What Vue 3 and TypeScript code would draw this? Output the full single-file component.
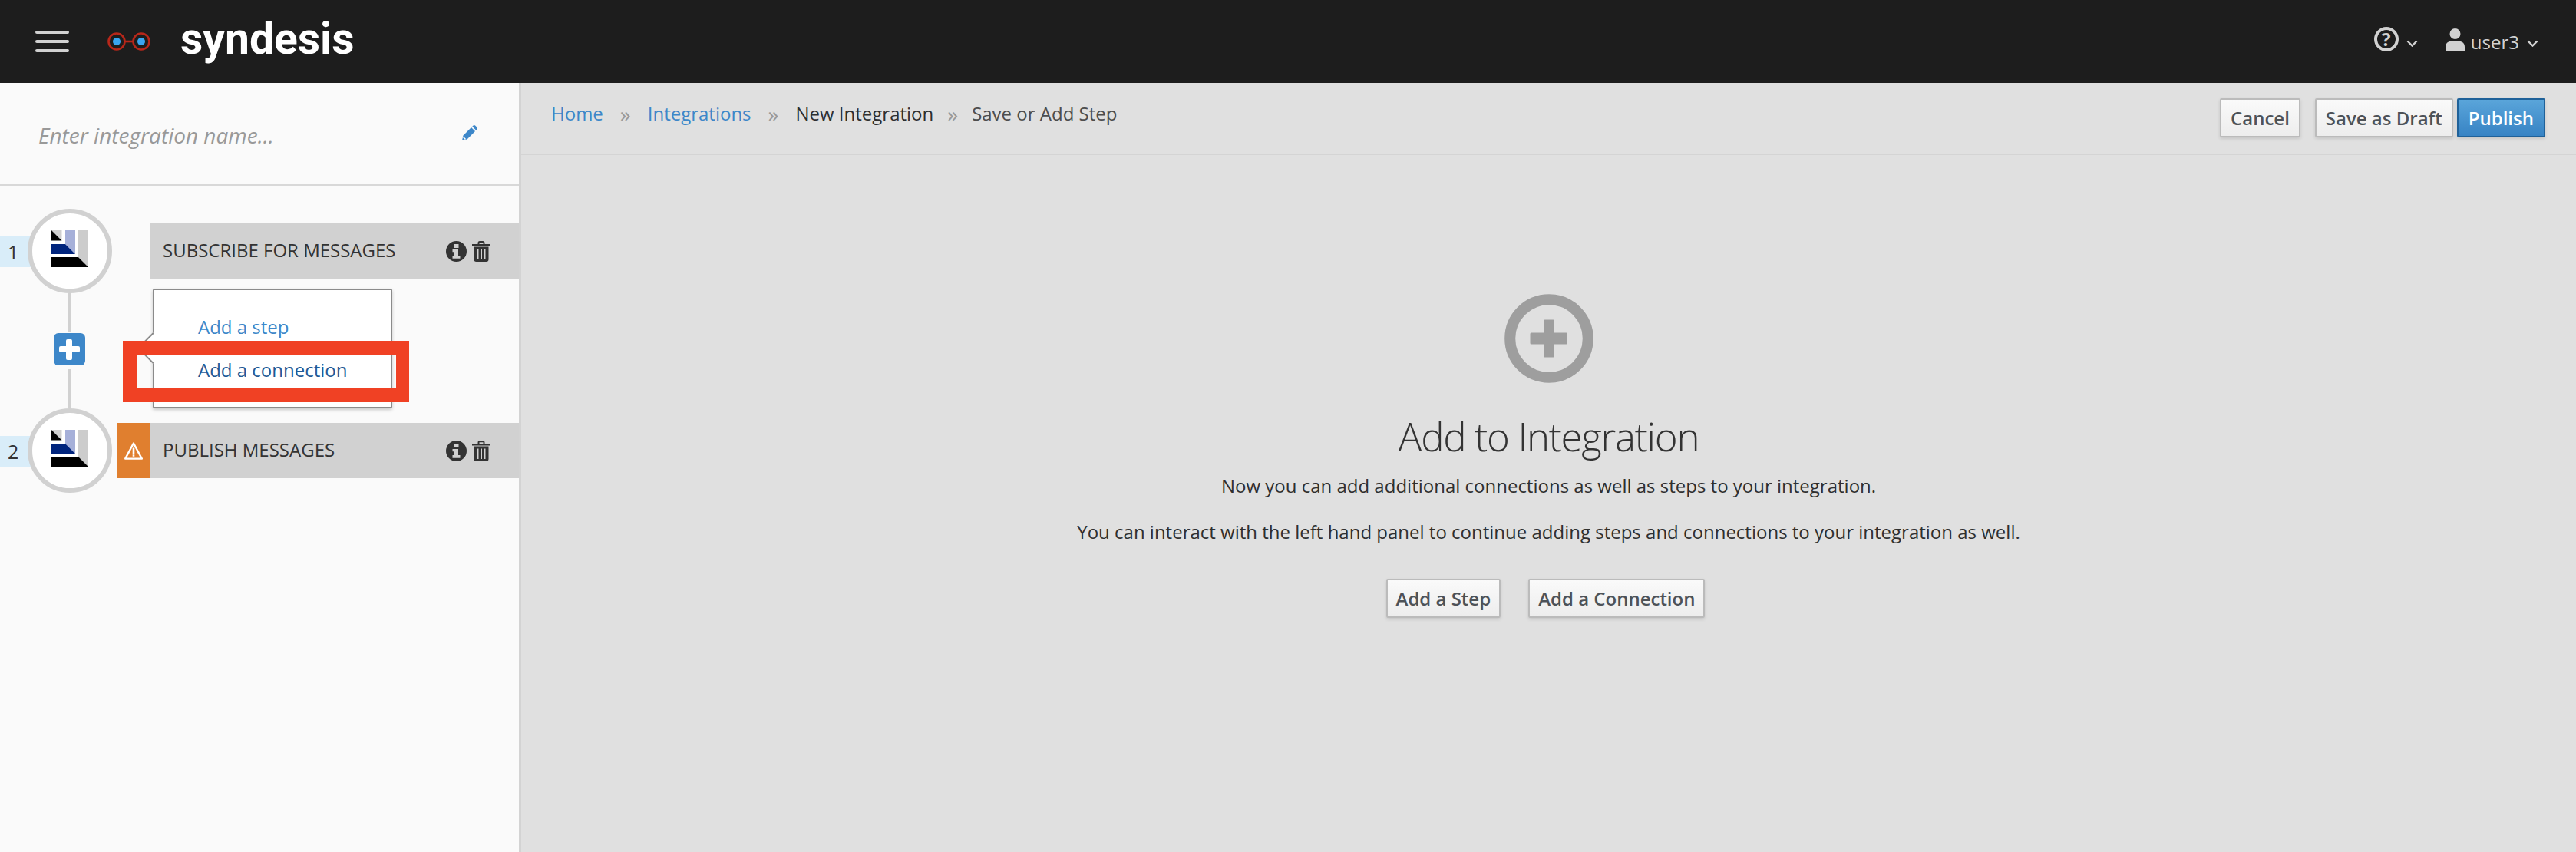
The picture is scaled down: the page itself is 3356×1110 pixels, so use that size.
<script setup lang="ts">
interface Step { n: number; name: string; warn: boolean }
const steps: Step[] = [
  { n: 1, name: 'SUBSCRIBE FOR MESSAGES', warn: false },
  { n: 2, name: 'PUBLISH MESSAGES', warn: true },
]
</script>

<template>
  <div class="page">
    <header class="top">
      <div class="burger"><i></i><i></i><i></i></div>
      <svg class="glasses" width="56" height="24" viewBox="0 0 56 24">
        <circle cx="12" cy="12" r="10.5" fill="none" stroke="#b8271a" stroke-width="2.6" />
        <circle cx="44" cy="12" r="10.5" fill="none" stroke="#b8271a" stroke-width="2.6" />
        <path d="M22 12h12" stroke="#b8271a" stroke-width="2.6" />
        <circle cx="12" cy="12" r="5" fill="#39a5f1" />
        <circle cx="44" cy="12" r="5" fill="#39a5f1" />
      </svg>
      <span class="brand">syndesis</span>
      <div class="top-right">
        <span class="help">?</span>
        <svg class="chev first" width="15" height="9" viewBox="0 0 15 9"><path d="M1.5 1.5l6 6 6-6" fill="none" stroke="#d1d1d1" stroke-width="2.4" /></svg>
        <svg class="user-ic" width="25" height="29" viewBox="0 0 25 29">
          <circle cx="12.5" cy="7" r="7" fill="#d1d1d1" />
          <path d="M0 29v-5c0-6 5-8 12.5-8S25 18 25 24v5z" fill="#d1d1d1" />
        </svg>
        <span class="user">user3</span>
        <svg class="chev" width="15" height="9" viewBox="0 0 15 9"><path d="M1.5 1.5l6 6 6-6" fill="none" stroke="#d1d1d1" stroke-width="2.4" /></svg>
      </div>
    </header>

    <div class="body">
      <aside class="side">
        <div class="name-row">
          <span class="placeholder">Enter integration name...</span>
          <svg class="pencil" width="20" height="20" viewBox="0 0 20 20">
            <path d="M0 20l1.5-6.5L12 3l5 5L6.5 18.500z" fill="#3d87c9" />
            <path d="M13.300 1.700l1-1a2.200 2.200 0 0 1 3 0l2 2a2.200 2.200 0 0 1 0 3l-1 1z" fill="#3d87c9" />
            <path d="M1.500 15.500l3 3" stroke="#fff" stroke-width="1.600" />
          </svg>
        </div>

        <div class="flow">
          <template v-for="(s, i) in steps" :key="s.n">
            <div class="step">
              <span class="num">{{ s.n }}</span>
              <span class="circle">
                <svg width="48" height="48" viewBox="0 0 48 48">
                  <path d="M0 0h13.500v13.500z" fill="#cfcfcf" />
                  <path d="M0 0l13.500 13.500H0z" fill="#000" />
                  <path d="M18 0h13v31L18 18z" fill="#a6b0d9" />
                  <path d="M0 18h18l13 13H0z" fill="#00247d" />
                  <path d="M35 0h13v48L35 35z" fill="#cccccc" />
                  <path d="M0 35h35l13 13H0z" fill="#000" />
                </svg>
              </span>
              <span class="warn" :class="{ on: s.warn }">
                <svg v-if="s.warn" width="24" height="24" viewBox="0 0 24 24">
                  <path d="M12 2.500L22.800 22.600H1.200z" fill="none" stroke="#fff" stroke-width="2.400" stroke-linejoin="round" />
                  <path d="M10.700 8.500h2.600v7.500h-2.600zM10.700 17.300h2.600v2.500h-2.600z" fill="#fff" />
                </svg>
              </span>
              <div class="bar">
                <span class="bar-name">{{ s.name }}</span>
                <svg width="27" height="27" viewBox="0 0 27 27">
                  <path fill-rule="evenodd" fill="#333" d="M13.500 0a13.500 13.500 0 1 1 0 27a13.500 13.500 0 1 1 0-27zM10.700 4v5h5.800V4zM8.500 11v3.200h2.500v4.800H8.500v3.800h10V19h-2.500v-8z" />
                </svg>
                <svg class="trash" width="24" height="27" viewBox="0 0 24 27">
                  <path fill="#333" d="M0 4h7.500V2.500A2.500 2.500 0 0 1 10 0h4a2.500 2.500 0 0 1 2.500 2.500V4H24v2.600H0zM9.500 4h5V2.200h-5z" fill-rule="evenodd" />
                  <path fill="#333" fill-rule="evenodd" d="M2.500 7.500h19V24a3 3 0 0 1-3 3h-13a3 3 0 0 1-3-3zM6.500 10.500V24h2V10.500zM11 10.500V24h2V10.500zM15.500 10.500V24h2V10.500z" />
                </svg>
              </div>
            </div>
            <div v-if="i === 0" class="link">
              <span class="line"></span>
              <span class="plus"><i></i></span>
              <span class="line"></span>
              <div class="pop">
                <span class="arrow"></span>
                <a class="pop-link">Add a step</a>
                <a class="pop-link dark">Add a connection</a>
              </div>
              <div class="mark"></div>
            </div>
          </template>
        </div>
      </aside>

      <main class="main">
        <div class="toolbar">
          <nav class="crumbs">
            <a>Home</a><span class="sep">»</span>
            <a>Integrations</a><span class="sep">»</span>
            <span class="c1">New Integration</span><span class="sep last">»</span>
            <span class="c2">Save or Add Step</span>
          </nav>
          <div class="actions">
            <button class="btn cancel">Cancel</button>
            <button class="btn">Save as Draft</button>
            <button class="btn primary">Publish</button>
          </div>
        </div>

        <section class="center">
          <svg width="116" height="116" viewBox="0 0 116 116">
            <circle cx="58" cy="58" r="50.800" fill="none" stroke="#9e9e9e" stroke-width="14" />
            <path d="M51 35a1.500 1.500 0 0 1 1.500-1.500h11A1.500 1.500 0 0 1 65 35v15.500h15.500A1.500 1.500 0 0 1 82 52v12a1.500 1.500 0 0 1-1.500 1.500H65V81a1.500 1.500 0 0 1-1.500 1.500h-11A1.500 1.500 0 0 1 51 81V65.500H35A1.500 1.500 0 0 1 33.500 64V52A1.500 1.500 0 0 1 35 50.500h16z" fill="#9e9e9e" />
          </svg>
          <h1>Add to Integration</h1>
          <p class="p1">Now you can add additional connections as well as steps to your integration.</p>
          <p class="p2">You can interact with the left hand panel to continue adding steps and connections to your integration as well.</p>
          <div class="cta">
            <button class="btn slim">Add a Step</button>
            <button class="btn slim">Add a Connection</button>
          </div>
        </section>
      </main>
    </div>
  </div>
</template>

<style scoped>
.page {
  width: 3356px;
  height: 1110px;
  display: flex;
  flex-direction: column;
  overflow: hidden;
  font-family: "Open Sans", "Liberation Sans", sans-serif;
  color: #333;
}
.top {
  height: 108px;
  flex: none;
  background: #1d1d1d;
  display: flex;
  align-items: center;
  padding: 0 49px 0 46px;
}
.burger {
  width: 44px;
  display: flex;
  flex-direction: column;
  gap: 8px;
}
.burger i {
  display: block;
  height: 4px;
  border-radius: 2px;
  background: #d1d1d1;
}
.glasses { margin-left: 50px; }
.brand {
  margin-left: 39px;
  font-family: Roboto, sans-serif;
  font-weight: 700;
  font-size: 57px;
  line-height: 108px;
  color: #fff;
  position: relative;
  top: -3px;
}
.top-right {
  margin-left: auto;
  display: flex;
  align-items: center;
  color: #d1d1d1;
}
.help {
  width: 32px;
  height: 32px;
  box-sizing: border-box;
  border: 4px solid #d1d1d1;
  border-radius: 50%;
  display: flex;
  align-items: center;
  justify-content: center;
  font-size: 24px;
  font-weight: 700;
  line-height: 1;
  margin-bottom: 6px;
}
.chev.first { margin: 4px 36px 0 10px; }
.chev { margin: 4px 0 0 10px; }
.user-ic { margin-bottom: 5px; }
.user {
  margin-left: 8px;
  margin-top: 2px;
  font-size: 24px;
  line-height: 30px;
}
.body {
  flex: 1;
  display: flex;
  min-height: 0;
}
.side {
  width: 676px;
  flex: none;
  background: #fafafa;
  border-right: 3px solid #d3d3d3;
}
.name-row {
  height: 132px;
  border-bottom: 2px solid #d8d8d8;
  display: flex;
  align-items: center;
  padding: 0 54px 0 50px;
}
.placeholder {
  font-style: italic;
  font-size: 28px;
  color: #999;
  margin-top: 3px;
}
.pencil { margin-left: auto; margin-top: -3px; }
.flow {
  padding-top: 30px;
}
.step {
  display: flex;
  align-items: center;
  height: 110px;
  position: relative;
}
.num {
  width: 44px;
  height: 40px;
  flex: none;
  box-sizing: border-box;
  padding-left: 10px;
  background: #d9edf9;
  font-size: 25px;
  line-height: 40px;
  margin-top: 2px;
}
.circle {
  width: 110px;
  height: 110px;
  flex: none;
  margin-left: -8px;
  box-sizing: border-box;
  border: 6px solid #d1d1d1;
  border-radius: 50%;
  background: #fff;
  display: flex;
  align-items: center;
  justify-content: center;
  position: relative;
}
.circle svg { margin-top: -6px; }
.warn {
  width: 44px;
  height: 72px;
  flex: none;
  margin-left: 6px;
  display: flex;
  align-items: center;
  justify-content: center;
}
.warn.on { background: #e07f2f; }
.bar {
  flex: 1;
  height: 72px;
  background: #d1d1d1;
  display: flex;
  align-items: center;
  padding: 0 37px 0 16px;
}
.bar-name {
  margin-right: auto;
  font-size: 24px;
  color: #333;
  position: relative;
  top: -2px;
}
.trash { margin-left: 7px; }
.link {
  height: 150px;
  position: relative;
  display: flex;
  flex-direction: column;
  align-items: center;
  width: 180px;
}
.line {
  width: 4px;
  background: #d1d1d1;
  flex: 1;
}
.plus {
  width: 41px;
  height: 42px;
  margin: 3px 0;
  border-radius: 6px;
  background: #3d87c9;
  position: relative;
  flex: none;
  top: -2px;
}
.plus i::before, .plus i::after {
  content: "";
  position: absolute;
  background: #fff;
  border-radius: 2px;
}
.plus i::before { left: 7px; right: 7px; top: 17px; height: 8px; }
.plus i::after { top: 8px; bottom: 7px; left: 16.500px; width: 8px; }
.pop {
  position: absolute;
  left: 199px;
  top: -6px;
  width: 312px;
  height: 156px;
  box-sizing: border-box;
  background: #fff;
  border: 2px solid #8b8b8b;
  border-radius: 2px;
  box-shadow: 0 2px 4px rgba(0, 0, 0, 0.2);
  padding-top: 31px;
  padding-left: 57px;
}
.arrow {
  position: absolute;
  left: -16px;
  top: 61px;
  width: 28.500px;
  height: 28.500px;
  background: #fff;
  border-left: 2px solid #8b8b8b;
  border-bottom: 2px solid #8b8b8b;
  box-sizing: border-box;
  transform: rotate(45deg);
}
.pop-link {
  display: block;
  position: relative;
  font-size: 24px;
  line-height: 33px;
  margin-bottom: 23px;
  color: #3d87c9;
}
.pop-link.dark { color: #1f5a96; }
.mark {
  position: absolute;
  left: 160px;
  top: 62px;
  width: 373px;
  height: 80px;
  box-sizing: border-box;
  border: 18px solid #f04124;
  border-right-width: 17px;
}
.main {
  flex: 1;
  min-width: 0;
  background: #e0e0e0;
  display: flex;
  flex-direction: column;
}
.toolbar {
  height: 92px;
  flex: none;
  border-bottom: 2px solid #d4d4d4;
  display: flex;
  align-items: center;
  padding: 0 40px 0 39px;
}
.crumbs {
  font-size: 24px;
  line-height: 32px;
  display: flex;
  align-items: center;
  margin-bottom: 13px;
}
.crumbs a { color: #3d87c9; }
.sep {
  color: #999;
  font-size: 28px;
  margin: 0 22px;
}
.sep.last { margin: 0 18px; }
.c1 { color: #2f2f2f; }
.c2 { color: #4d4d4d; }
.actions {
  margin-left: auto;
  display: flex;
  gap: 5px;
  margin-bottom: 1px;
}
.btn {
  height: 51px;
  padding: 0 12px;
  font-family: inherit;
  font-size: 24px;
  font-weight: 600;
  color: #4d5258;
  background: linear-gradient(#fafafa, #ededed);
  border: 2px solid #bbb;
  border-radius: 2px;
  box-shadow: 0 2px 4px rgba(0, 0, 0, 0.12);
}
.btn.slim { padding: 0 11px; }
.btn.cancel { margin-right: 14px; }
.btn.primary {
  padding: 0 13px;
  color: #fff;
  background: linear-gradient(#5aa5da, #3783c4);
  border-color: #1f6199;
}
.center {
  flex: 1;
  display: flex;
  flex-direction: column;
  align-items: center;
  padding-top: 181px;
}
h1 {
  margin: 34px 0 0;
  font-size: 51px;
  font-weight: 300;
  letter-spacing: -1.3px;
  line-height: 70px;
  color: #333;
}
.p1, .p2 {
  margin: 0;
  font-size: 24px;
  line-height: 34px;
  color: #2f2f2f;
}
.p1 { margin-top: 13px; }
.p2 { margin-top: 26px; }
.cta {
  display: flex;
  gap: 36px;
  margin-top: 44px;
  margin-right: 8px;
}
</style>

<style>
html, body { margin: 0; background: #e0e0e0; }
</style>
